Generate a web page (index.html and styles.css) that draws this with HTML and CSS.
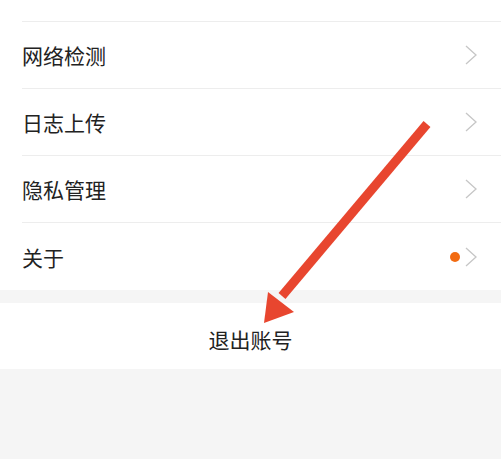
FILE: index.html
```html
<!DOCTYPE html>
<html>
<head>
    <title>设置</title>
    <meta name="viewport" content="width=device-width, initial-scale=1.0">
    <link rel="stylesheet" href="styles.css">
</head>
<body>
    <div class="list">
        <div class="row row-top"></div>
        <div class="row">
            <span class="label">网络检测</span>
            <svg class="chevron" viewBox="0 0 12 20"><path d="M1 1 L11 10 L1 19" /></svg>
        </div>
        <div class="row">
            <span class="label">日志上传</span>
            <svg class="chevron" viewBox="0 0 12 20"><path d="M1 1 L11 10 L1 19" /></svg>
        </div>
        <div class="row">
            <span class="label">隐私管理</span>
            <svg class="chevron" viewBox="0 0 12 20"><path d="M1 1 L11 10 L1 19" /></svg>
        </div>
        <div class="row row-last">
            <span class="label">关于</span>
            <span class="dot"></span>
            <svg class="chevron" viewBox="0 0 12 20"><path d="M1 1 L11 10 L1 19" /></svg>
        </div>
    </div>

    <div class="logout">退出账号</div>

    <svg class="arrow" viewBox="0 0 501 459">
        <line x1="427" y1="124" x2="282" y2="296" />
        <polygon points="264,323 268,292 294,312" />
    </svg>
</body>
</html>
```

FILE: styles.css
```css
body {
    margin: 0;
    padding: 0;
    background-color: #f5f5f5;
    font-family: "Noto Sans CJK SC", "Noto Sans", sans-serif;
    color: #222;
}

.list {
    background-color: #fff;
}

.row {
    display: flex;
    align-items: center;
    height: 66px;
    margin-left: 22px;
    padding-right: 24px;
    border-bottom: 1px solid #ededed;
}

.row-top {
    height: 21px;
}

.row-last {
    border-bottom: none;
    height: 67px;
}

.label {
    flex: 1;
    font-size: 21px;
    letter-spacing: 0;
}

.dot {
    width: 10px;
    height: 10px;
    border-radius: 50%;
    background-color: #f26b12;
    margin-right: 5px;
}

.chevron {
    width: 12px;
    height: 20px;
    fill: none;
    stroke: #c6c6c6;
    stroke-width: 1.3;
}

.logout {
    margin-top: 13px;
    height: 66px;
    background-color: #fff;
    display: flex;
    align-items: center;
    justify-content: center;
    font-size: 21px;
    padding-top: 6px;
    box-sizing: border-box;
}

.arrow {
    position: absolute;
    top: 0;
    left: 0;
    width: 501px;
    height: 459px;
    pointer-events: none;
}

.arrow line {
    stroke: #e8462f;
    stroke-width: 9;
}

.arrow polygon {
    fill: #e8462f;
}
```
